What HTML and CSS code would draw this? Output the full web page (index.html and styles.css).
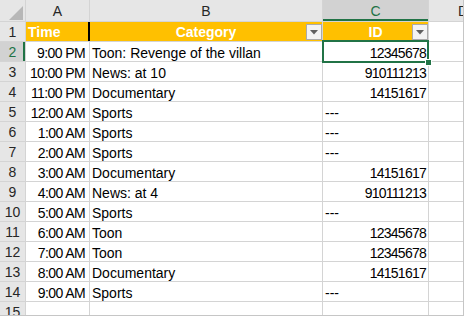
FILE: index.html
```html
<!DOCTYPE html>
<html>
<head>
<meta charset="utf-8">
<link rel="stylesheet" href="styles.css">
</head>
<body>
<div class="sheet">
  <div class="corner"><svg class="corner-tri" width="14" height="14" viewBox="0 0 14 14"><polygon points="14,0 14,14 0,14" fill="#b7b7b7"/></svg></div>
  <div class="colhdr">A</div>
  <div class="colhdr">B</div>
  <div class="colhdr colhdr-sel">C</div>
  <div class="colhdr colhdr-d">D</div>

  <div class="rowhdr">1</div>
  <div class="cell head head-time">Time</div>
  <div class="cell head head-center">Category<span class="filter"><svg width="8" height="5" viewBox="0 0 8 5"><polygon points="0,0 8,0 4,4.5" fill="#606060"/></svg></span></div>
  <div class="cell head head-center">ID<span class="filter"><svg width="8" height="5" viewBox="0 0 8 5"><polygon points="0,0 8,0 4,4.5" fill="#606060"/></svg></span></div>
  <div class="cell head-blank"></div>

  <div class="rowhdr rowhdr-sel">2</div>
  <div class="cell num time">9:00 PM</div>
  <div class="cell">Toon: Revenge of the villan</div>
  <div class="cell num id selected">12345678</div>
  <div class="cell"></div>

  <div class="rowhdr">3</div>
  <div class="cell num time">10:00 PM</div>
  <div class="cell">News: at 10</div>
  <div class="cell num id">910111213</div>
  <div class="cell"></div>

  <div class="rowhdr">4</div>
  <div class="cell num time">11:00 PM</div>
  <div class="cell">Documentary</div>
  <div class="cell num id">14151617</div>
  <div class="cell"></div>

  <div class="rowhdr">5</div>
  <div class="cell num time">12:00 AM</div>
  <div class="cell">Sports</div>
  <div class="cell">---</div>
  <div class="cell"></div>

  <div class="rowhdr">6</div>
  <div class="cell num time">1:00 AM</div>
  <div class="cell">Sports</div>
  <div class="cell">---</div>
  <div class="cell"></div>

  <div class="rowhdr">7</div>
  <div class="cell num time">2:00 AM</div>
  <div class="cell">Sports</div>
  <div class="cell">---</div>
  <div class="cell"></div>

  <div class="rowhdr">8</div>
  <div class="cell num time">3:00 AM</div>
  <div class="cell">Documentary</div>
  <div class="cell num id">14151617</div>
  <div class="cell"></div>

  <div class="rowhdr">9</div>
  <div class="cell num time">4:00 AM</div>
  <div class="cell">News: at 4</div>
  <div class="cell num id">910111213</div>
  <div class="cell"></div>

  <div class="rowhdr">10</div>
  <div class="cell num time">5:00 AM</div>
  <div class="cell">Sports</div>
  <div class="cell">---</div>
  <div class="cell"></div>

  <div class="rowhdr">11</div>
  <div class="cell num time">6:00 AM</div>
  <div class="cell">Toon</div>
  <div class="cell num id">12345678</div>
  <div class="cell"></div>

  <div class="rowhdr">12</div>
  <div class="cell num time">7:00 AM</div>
  <div class="cell">Toon</div>
  <div class="cell num id">12345678</div>
  <div class="cell"></div>

  <div class="rowhdr">13</div>
  <div class="cell num time">8:00 AM</div>
  <div class="cell">Documentary</div>
  <div class="cell num id">14151617</div>
  <div class="cell"></div>

  <div class="rowhdr">14</div>
  <div class="cell num time">9:00 AM</div>
  <div class="cell">Sports</div>
  <div class="cell">---</div>
  <div class="cell"></div>

  <div class="rowhdr">15</div>
  <div class="cell"></div>
  <div class="cell"></div>
  <div class="cell"></div>
  <div class="cell"></div>
</div>
</body>
</html>
```

FILE: styles.css
```css
html, body {
  margin: 0;
  padding: 0;
  background: #ffffff;
  overflow: hidden;
}

.sheet {
  width: 464px;
  height: 316px;
  box-sizing: border-box;
  border-right: 1px solid #c6c6c6;
  border-bottom: 1px solid #c6c6c6;
  overflow: hidden;
  display: grid;
  grid-template-columns: 25px 63px 232px 105px 1fr;
  grid-template-rows: 21px repeat(15, 19px);
  gap: 1px;
  background: #d4d4d4;
  font-family: "Liberation Sans", Arial, sans-serif;
  font-size: 14px;
  color: #000;
}

.corner {
  background: #e6e6e6;
  position: relative;
}

.corner-tri {
  position: absolute;
  right: 2px;
  bottom: 1px;
}

.colhdr {
  background: #e6e6e6;
  color: #262626;
  text-align: center;
  line-height: 21px;
  padding-top: 1px;
  box-sizing: border-box;
}

.colhdr-sel {
  background: #d2d2d2;
  color: #217346;
  box-shadow: inset 0 -2px 0 #217346;
}

.colhdr-d {
  text-align: left;
  padding-left: 29px;
  overflow: hidden;
}

.rowhdr {
  background: #e6e6e6;
  color: #262626;
  text-align: center;
  line-height: 19px;
  padding-top: 1px;
  box-sizing: border-box;
}

.rowhdr-sel {
  background: #d2d2d2;
  color: #217346;
  box-shadow: inset -2px 0 0 #217346;
}

.cell {
  background: #ffffff;
  line-height: 19px;
  padding: 2px 2px 0 2px;
  box-sizing: border-box;
  white-space: nowrap;
  position: relative;
}

.num {
  text-align: right;
}

.time {
  letter-spacing: -0.6px;
  padding-right: 4px;
}

.id {
  letter-spacing: -0.75px;
  padding-right: 2px;
}

.head {
  background: #ffc000;
  color: #ffffff;
  font-weight: bold;
  padding-top: 1px;
}

.head-time {
  box-shadow: inset -1px 0 0 #000, 1px 0 0 #000;
  z-index: 1;
}

.head-center {
  text-align: center;
}

.filter {
  position: absolute;
  right: 0;
  top: 2px;
  width: 16px;
  height: 16px;
  box-sizing: border-box;
  border: 1px solid #ababab;
  background: #f3f3f3;
  display: flex;
  align-items: center;
  justify-content: center;
}

.selected::after {
  content: "";
  position: absolute;
  left: -1px;
  top: -2px;
  right: -1px;
  bottom: -2px;
  border: 2px solid #217346;
  z-index: 2;
}

.selected::before {
  content: "";
  position: absolute;
  right: -4px;
  bottom: -5px;
  width: 5px;
  height: 5px;
  background: #217346;
  border: 1px solid #ffffff;
  z-index: 3;
}
```
